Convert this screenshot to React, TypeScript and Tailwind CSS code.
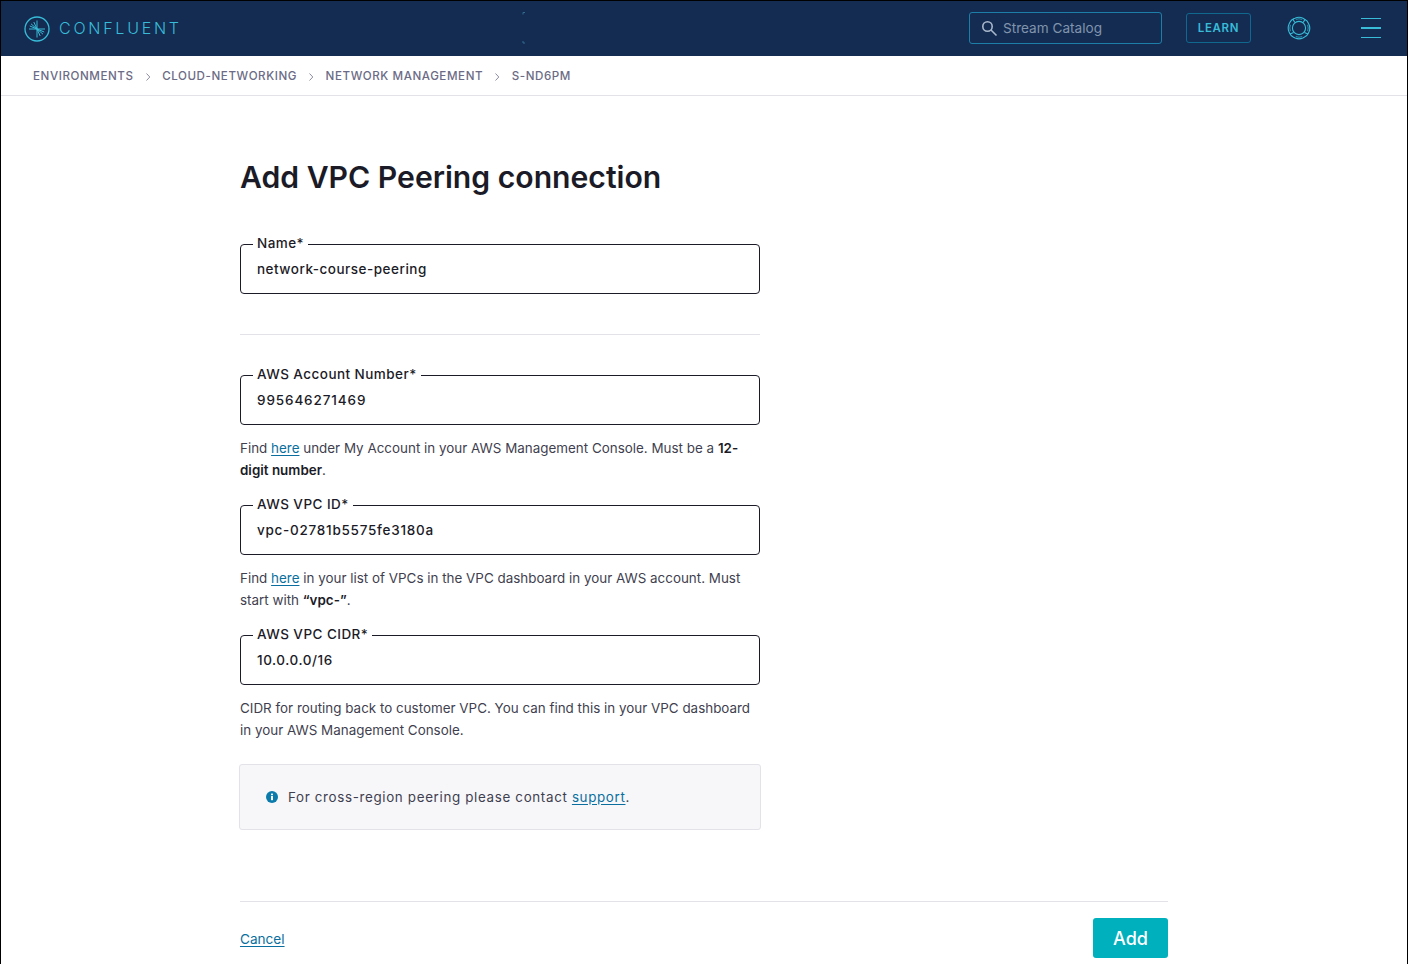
const inter = "font-['Inter',sans-serif]";

function Logo() {
  return (
    <svg width="26" height="26" viewBox="0 0 26 26" fill="none" stroke="#38bcd8">
      <circle cx="13" cy="13" r="12" strokeWidth="1.3" />
      <path d="M13 4.5V21.5" strokeWidth="1" />
      <path d="M13 13L5 13M13 13L5.8 10M13 13L7 7.8M13 13L9.8 6" strokeWidth="1" />
      <path d="M13 13L21 13M13 13L20.2 16M13 13L19 18.2M13 13L16.2 20" strokeWidth="1" />
    </svg>
  );
}

function Lifebuoy() {
  return (
    <svg width="24" height="24" viewBox="0 0 24 24" fill="none" stroke="#38bcd8" strokeWidth="1.1">
      <path d="M8 2.2C10.5 1 13.5 1 16 2.2L17.5 3.2C19.5 4 20.8 5.5 21.5 7.5L22 8.5C23 10.8 23 13.5 22 15.8L21.2 17.5C20.4 19.3 19 20.6 17.2 21.3L15.8 22C13.5 23 10.5 23 8.2 22L6.5 21.2C4.8 20.4 3.4 19 2.7 17.2L2 15.8C1 13.5 1 10.5 2 8.2L2.8 6.5C3.6 4.8 5 3.5 6.6 2.8Z" />
      <circle cx="12" cy="12" r="6.6" />
      <path d="M5.8 3L7.8 6.6M18.2 3L16.2 6.6M21 18L17.4 16.4M3 18L6.6 16.4" />
      <path d="M8.8 3.4A9 9 0 0 1 15.2 3.4M20.6 8.8A9 9 0 0 1 20.6 15.2M15.2 20.6A9 9 0 0 1 8.8 20.6M3.4 15.2A9 9 0 0 1 3.4 8.8" strokeWidth="0.7" />
    </svg>
  );
}

function Chevron() {
  return (
    <svg width="6" height="8" viewBox="0 0 6 8" fill="none" stroke="#8d8da3" strokeWidth="1">
      <path d="M1.5 0.5L4.8 4L1.5 7.5" />
    </svg>
  );
}

function Field({
  label,
  value,
  tracking = "tracking-[0.5px]",
}: {
  label: string;
  value: string;
  tracking?: string;
}) {
  return (
    <fieldset className="h-[58px] border border-[#1b1b27] rounded-[4px] px-3 -mt-[8px] min-w-0">
      <legend className="px-1 pb-[2px] text-[13.5px] leading-[14px] font-medium text-[#1b1b27] tracking-[0.45px]">
        {label}
      </legend>
      <div className={`pl-1 pt-[7px] text-[13.5px] leading-[20px] font-medium text-[#1b1b27] ${tracking}`}>
        {value}
      </div>
    </fieldset>
  );
}

function Help({ children }: { children: React.ReactNode }) {
  return <p className="mt-[12px] text-[13.4px] leading-[22px] tracking-[0.01px] text-[#3f3f50]">{children}</p>;
}

function Here() {
  return <a className="text-[#0a6f9e] underline underline-offset-2">here</a>;
}

export default function App() {
  return (
    <div className={`${inter} h-[964px] overflow-hidden bg-white border-x border-t border-black`}>
      <header className="relative h-[55px] bg-[#142c52] flex items-center pl-[23px] pr-[26px]">
        <Logo />
        <span className="ml-[9px] mb-[2px] text-[16px] text-[#38bcd8] tracking-[2.75px] font-light">CONFLUENT</span>
        <svg className="absolute left-[521px] top-[10px]" width="6" height="34" viewBox="0 0 6 34" fill="none" stroke="#2f6c8f">
          <path d="M1 3.5V1.5H3" />
          <path d="M1 30V32H3" />
        </svg>
        <div className="ml-auto flex items-center mb-[1px]">
          <div className="w-[193px] h-[32px] border border-[#1d7ea8] rounded-[3px] flex items-center pl-[11px]">
            <svg width="17" height="17" viewBox="0 0 17 17" fill="none" stroke="#a9b8cc" strokeWidth="1.6">
              <circle cx="6.5" cy="6.5" r="4.7" />
              <path d="M10 10L15.5 15.5" />
            </svg>
            <span className="ml-[5px] pt-[1px] text-[13.6px] text-[#8194ad]">Stream Catalog</span>
          </div>
          <div className="ml-[24px] w-[65px] h-[30px] pt-[1px] border border-[#11688f] rounded-[3px] flex items-center justify-center text-[11.5px] font-semibold tracking-[0.65px] text-[#38bcd8]">
            LEARN
          </div>
          <div className="ml-[36px]">
            <Lifebuoy />
          </div>
          <div className="ml-[50px] w-[20px] flex flex-col gap-[8px]">
            <div className="h-[1.5px] bg-[#38bcd8]" />
            <div className="h-[1.5px] bg-[#38bcd8]" />
            <div className="h-[1.5px] bg-[#38bcd8]" />
          </div>
        </div>
      </header>

      <nav className="h-[40px] border-b border-[#e2e2e8] pl-[32px] pt-[2px] flex items-center gap-[11.3px] text-[11.6px] font-medium tracking-[0.57px] text-[#6b6b85]">
        <span>ENVIRONMENTS</span>
        <Chevron />
        <span>CLOUD-NETWORKING</span>
        <Chevron />
        <span>NETWORK MANAGEMENT</span>
        <Chevron />
        <span>S-ND6PM</span>
      </nav>

      <main className="pl-[239px] pr-[239px]">
        <h1 className="mt-[61px] text-[30.15px] leading-[40px] font-semibold text-[#1b1b27]">
          Add VPC Peering connection
        </h1>

        <div className="w-[520px]">
          <div className="mt-[47px]">
            <Field label="Name*" value="network-course-peering" />
          </div>
          <div className="mt-[40px] border-t border-[#e2e2e8]" />

          <div className="mt-[40px]">
            <Field label="AWS Account Number*" value="995646271469" tracking="tracking-[0.88px]" />
          </div>
          <Help>
            Find <Here /> under My Account in your AWS Management Console. Must be a{" "}
            <b className="font-semibold text-[#1b1b27]">12-digit number</b>.
          </Help>

          <div className="mt-[24px]">
            <Field label="AWS VPC ID*" value="vpc-02781b5575fe3180a" tracking="tracking-[0.74px]" />
          </div>
          <Help>
            Find <Here /> in your list of VPCs in the VPC dashboard in your AWS account. Must start with{" "}
            <b className="font-semibold text-[#1b1b27]">“vpc-”</b>.
          </Help>

          <div className="mt-[24px]">
            <Field label="AWS VPC CIDR*" value="10.0.0.0/16" tracking="tracking-[0.55px]" />
          </div>
          <Help>
            CIDR for routing back to customer VPC. You can find this in your VPC dashboard in your AWS Management
            Console.
          </Help>

          <div className="mt-[23px] w-[522px] -ml-px h-[66px] bg-[#f7f7fa] border border-[#e2e2e8] rounded-[3px] flex items-center pl-[26px]">
            <svg width="12" height="12" viewBox="0 0 12 12">
              <circle cx="6" cy="6" r="6" fill="#0a7bab" />
              <rect x="5" y="5" width="2" height="4.2" fill="#fff" />
              <rect x="5" y="2.6" width="2" height="1.6" fill="#fff" />
            </svg>
            <p className="ml-[10px] text-[13.4px] tracking-[0.65px] text-[#3f3f50]">
              For cross-region peering please contact{" "}
              <a className="text-[#0a6f9e] underline underline-offset-2">support</a>.
            </p>
          </div>
        </div>

        <div className="mt-[71px] border-t border-[#e2e2e8] pt-[16px] flex items-center justify-between">
          <a className="mt-[3px] text-[13.6px] text-[#0a6f9e] underline underline-offset-2">Cancel</a>
          <button className="w-[75px] h-[40px] rounded-[3px] bg-[#00b0bd] text-white text-[18px] font-medium">
            Add
          </button>
        </div>
      </main>
    </div>
  );
}
